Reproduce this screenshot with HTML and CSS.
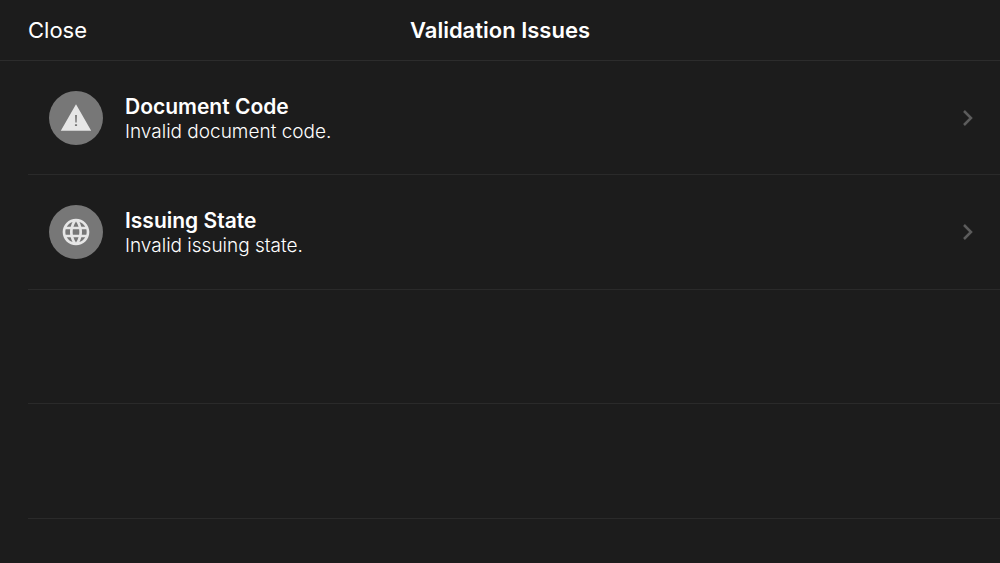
FILE: index.html
```html
<!DOCTYPE html>
<html lang="en">
<head>
    <meta charset="UTF-8">
    <meta name="viewport" content="width=device-width, initial-scale=1">
    <title>Validation Issues</title>
    <link rel="stylesheet" href="styles.css">
</head>
<body>
    <header class="navbar">
        <button type="button" class="close">Close</button>
        <h1 class="title">Validation Issues</h1>
    </header>
    <ul class="list">
        <li>
            <a href="#" class="issue">
                <span class="icon">
                    <svg viewBox="0 0 24 24" aria-hidden="true">
                        <path fill-rule="evenodd" d="M.6 21.5h22.8L12 1.6.6 21.5zM11.3 9.7h1.4l-.2 5.6h-1zM11.2 16.6h1.6v1.4h-1.6z"/>
                    </svg>
                </span>
                <span class="text">
                    <strong>Document Code</strong>
                    <span>Invalid document code.</span>
                </span>
                <svg class="arrow" viewBox="0 0 12 18" aria-hidden="true">
                    <path d="M2 2l7 7-7 7"/>
                </svg>
            </a>
        </li>
        <li>
            <a href="#" class="issue">
                <span class="icon">
                    <svg viewBox="0 0 24 24" aria-hidden="true">
                        <path d="M11.99 2C6.47 2 2 6.48 2 12s4.47 10 9.99 10C17.52 22 22 17.52 22 12S17.52 2 11.99 2zm6.93 6h-2.95c-.32-1.25-.78-2.45-1.38-3.56 1.84.63 3.37 1.91 4.33 3.56zM12 4.04c.83 1.2 1.48 2.53 1.91 3.96h-3.82c.43-1.43 1.08-2.76 1.91-3.96zM4.26 14C4.1 13.36 4 12.69 4 12s.1-1.36.26-2h3.38c-.08.66-.14 1.32-.14 2s.06 1.34.14 2H4.26zm.82 2h2.95c.32 1.25.78 2.45 1.38 3.56-1.84-.63-3.37-1.9-4.33-3.56zm2.95-8H5.08c.96-1.66 2.49-2.93 4.33-3.56C8.81 5.55 8.35 6.75 8.03 8zM12 19.96c-.83-1.2-1.48-2.53-1.91-3.96h3.82c-.43 1.43-1.08 2.76-1.91 3.96zM14.34 14H9.66c-.09-.66-.16-1.32-.16-2s.07-1.35.16-2h4.68c.09.65.16 1.32.16 2s-.07 1.34-.16 2zm.25 5.56c.6-1.11 1.06-2.31 1.38-3.56h2.95c-.96 1.65-2.49 2.93-4.33 3.56zM16.36 14c.08-.66.14-1.32.14-2s-.06-1.34-.14-2h3.38c.16.64.26 1.31.26 2s-.1 1.36-.26 2h-3.38z"/>
                    </svg>
                </span>
                <span class="text">
                    <strong>Issuing State</strong>
                    <span>Invalid issuing state.</span>
                </span>
                <svg class="arrow" viewBox="0 0 12 18" aria-hidden="true">
                    <path d="M2 2l7 7-7 7"/>
                </svg>
            </a>
        </li>
        <li></li>
        <li></li>
    </ul>
</body>
</html>
```
FILE: styles.css
```css
*{
    margin: 0;
    padding: 0;
    box-sizing: border-box;
}
body{
    min-height: 100vh;
    background: #1c1c1c;
    color: #fff;
    font-family: Inter, "Liberation Sans", sans-serif;
}
ul{
    list-style: none;
}
a{
    color: inherit;
    text-decoration: none;
}
.navbar{
    display: grid;
    grid-template-columns: 1fr auto 1fr;
    align-items: center;
    min-height: 61px;
    padding: 0 28px;
    border-bottom: 1px solid #2c2c2c;
}
.close{
    justify-self: start;
    border: 0;
    background: none;
    color: inherit;
    font-family: inherit;
    font-size: 22px;
    line-height: 28px;
    cursor: pointer;
}
.title{
    font-size: 22px;
    line-height: 28px;
    font-weight: 600;
}
.list{
    padding-left: 28px;
}
.list li{
    display: flex;
    min-height: 114px;
    border-bottom: 1px solid #2a2a2a;
}
.list li:nth-child(even){
    min-height: 115px;
}
.issue{
    flex: 1;
    display: flex;
    align-items: center;
    gap: 22px;
    padding: 0 26px 0 21px;
}
.icon{
    display: flex;
    align-items: center;
    justify-content: center;
    width: 54px;
    height: 54px;
    border-radius: 50%;
    background: #777;
}
.icon svg{
    width: 32px;
    height: 32px;
    fill: #e6e6e6;
}
.text{
    flex: 1;
    display: flex;
    flex-direction: column;
    padding-top: 2px;
    font-size: 19px;
    font-weight: 300;
    line-height: 24px;
}
.text strong{
    font-size: 21px;
    font-weight: 600;
    line-height: 26px;
}
.arrow{
    width: 12px;
    height: 18px;
    fill: none;
    stroke: #5c5c5c;
    stroke-width: 2.5;
}
```
